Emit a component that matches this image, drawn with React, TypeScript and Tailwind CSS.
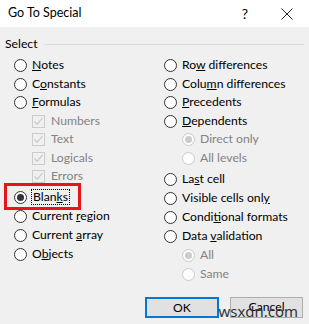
import React from "react";

type Item = {
  label: React.ReactNode;
  kind: "radio" | "check" | "sub";
  checked?: boolean;
  disabled?: boolean;
  h: string;
};

const U = ({ children }: { children: React.ReactNode }) => <span className="underline underline-offset-1">{children}</span>;

const left: Item[][] = [
  [
    { label: <><U>N</U>otes</>, kind: "radio", h: "h-[18.5px]" },
    { label: <>C<U>o</U>nstants</>, kind: "radio", h: "h-[18.5px]" },
    { label: <><U>F</U>ormulas</>, kind: "radio", h: "h-[18.5px]" },
    { label: "Numbers", kind: "check", disabled: true, h: "h-[18.5px]" },
    { label: "Text", kind: "check", disabled: true, h: "h-[18.5px]" },
    { label: "Logicals", kind: "check", disabled: true, h: "h-[18.5px]" },
    { label: "Errors", kind: "check", disabled: true, h: "h-[18.5px]" }
  ],
  [
    { label: <>Blan<U>k</U>s</>, kind: "radio", checked: true, h: "h-[19px]" },
    { label: <>Current <U>r</U>egion</>, kind: "radio", h: "h-[19px]" },
    { label: <>Current <U>a</U>rray</>, kind: "radio", h: "h-[19px]" },
    { label: <>O<U>b</U>jects</>, kind: "radio", h: "h-[19px]" }
  ]
];

const right: Item[][] = [
  [
    { label: <>Ro<U>w</U> differences</>, kind: "radio", h: "h-[18.5px]" },
    { label: <>Colu<U>m</U>n differences</>, kind: "radio", h: "h-[18.5px]" },
    { label: <><U>P</U>recedents</>, kind: "radio", h: "h-[18.5px]" },
    { label: <><U>D</U>ependents</>, kind: "radio", h: "h-[18.5px]" },
    { label: "Direct only", kind: "sub", checked: true, disabled: true, h: "h-[18.5px]" },
    { label: "All levels", kind: "sub", disabled: true, h: "h-[18.5px]" }
  ],
  [
    { label: <>La<U>s</U>t cell</>, kind: "radio", h: "h-[19px]" },
    { label: <>Visible cells onl<U>y</U></>, kind: "radio", h: "h-[19px]" },
    { label: <>Condi<U>t</U>ional formats</>, kind: "radio", h: "h-[19px]" },
    { label: <>Data <U>v</U>alidation</>, kind: "radio", h: "h-[19px]" },
    { label: "All", kind: "sub", checked: true, disabled: true, h: "h-[19px]" },
    { label: "Same", kind: "sub", disabled: true, h: "h-[19px]" }
  ]
];

function Radio({ checked, disabled }: { checked?: boolean; disabled?: boolean }) {
  return (
    <span
      className={`grid size-[13px] shrink-0 place-items-center rounded-full border ${
        disabled ? "border-[#cccccc] bg-[#fcfcfc]" : "border-[#333333] bg-white"
      }`}
    >
      {checked ? <span className={`size-[7px] rounded-full ${disabled ? "bg-[#cccccc]" : "bg-[#333333]"}`} /> : null}
    </span>
  );
}

function Check() {
  return (
    <span className="grid size-[13px] shrink-0 place-items-center border border-[#cccccc] bg-[#f0f0f0]">
      <svg width="11" height="11" viewBox="0 0 11 11" fill="none">
        <path d="M1.5 5.5 L4.2 8.2 L9.5 2" stroke="#c4c4c4" strokeWidth="1.1" />
      </svg>
    </span>
  );
}

function Row({ item }: { item: Item }) {
  const indent = item.kind === "radio" ? "pl-0" : "pl-[18px]";
  return (
    <div className={`flex items-center ${item.h} ${indent}`}>
      {item.kind === "check" ? <Check /> : <Radio checked={item.checked} disabled={item.disabled} />}
      <span
        className={`ml-[5px] leading-none ${item.disabled ? "text-[#838383]" : "text-black"} ${
          item.checked && !item.disabled ? "outline outline-1 outline-dotted outline-black px-[1px] -ml-[1px] py-[1px]" : ""
        } ${item.kind === "check" ? "ml-[6px]" : ""}`}
      >
        {item.label}
      </span>
    </div>
  );
}

function Column({ groups, second }: { groups: Item[][]; second: string }) {
  return (
    <div className="flex flex-col">
      {groups[0].map((it, i) => (
        <Row item={it} key={i} />
      ))}
      <div className={second} />
      {groups[1].map((it, i) =>
        it.checked && !it.disabled ? (
          <div className="relative" key={i}>
            <div className="absolute -left-[10px] -top-[5px] h-[27px] w-[77px] border-[3px] border-[#e8141b]" />
            <Row item={it} />
          </div>
        ) : (
          <Row item={it} key={i} />
        )
      )}
    </div>
  );
}

export default function App() {
  return (
    <div className="h-[324px] w-[309px] bg-[#f0f0f0] text-[12.2px]" style={{ fontFamily: 'Lato, "Noto Sans", sans-serif' }}>
      <div className="flex h-[27px] items-center bg-white pl-[8px] text-[12.5px] text-black">
        <span className="flex-1">Go To Special</span>
        <span className="mr-[33px] text-[14px]">?</span>
        <svg width="12" height="12" viewBox="0 0 12 12" className="mr-[16px]">
          <path d="M0.5 0.5 L11.5 11.5 M11.5 0.5 L0.5 11.5" stroke="#222" strokeWidth="1" />
        </svg>
      </div>
      <div className="mt-[8px] flex items-center px-[5px]">
        <span className="text-black">Select</span>
        <div className="ml-[6px] h-px flex-1 bg-[#dcdcdc]" />
      </div>
      <div className="mt-[3px] grid grid-cols-[150px_1fr] pl-[14px]">
        <Column groups={left} second="h-[2px]" />
        <Column groups={right} second="h-[2.5px]" />
      </div>
      <div className="relative mt-[13px] flex justify-end gap-[11px] pr-[6px]">
        <button className="h-[21px] w-[74px] border-2 border-[#0078d7] bg-[#e1e1e1] text-black">OK</button>
        <button className="h-[21px] w-[73px] border border-[#adadad] bg-[#e1e1e1] text-black">Cancel</button>
        <span className="absolute right-[11px] top-[7px] text-[15px] leading-none text-[#333333]" style={{ fontFamily: '"Noto Sans", sans-serif' }}>
          wsxdn.com
        </span>
      </div>
    </div>
  );
}
